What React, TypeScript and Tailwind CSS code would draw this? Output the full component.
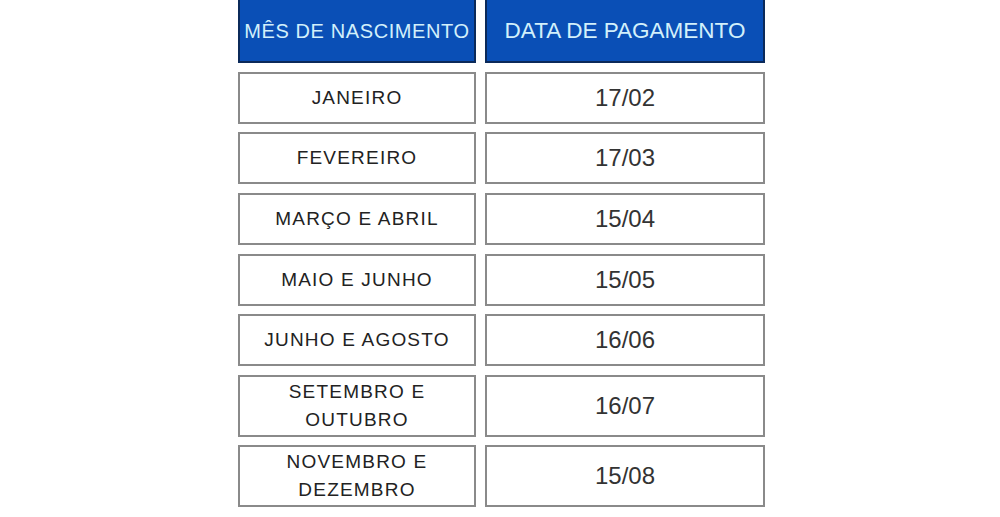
import React from "react";

const rows = [
  { mes: "JANEIRO", data: "17/02", tall: false },
  { mes: "FEVEREIRO", data: "17/03", tall: false },
  { mes: "MARÇO E ABRIL", data: "15/04", tall: false },
  { mes: "MAIO E JUNHO", data: "15/05", tall: false },
  { mes: "JUNHO E AGOSTO", data: "16/06", tall: false },
  { mes: "SETEMBRO E OUTUBRO", data: "16/07", tall: true },
  { mes: "NOVEMBRO E DEZEMBRO", data: "15/08", tall: true },
];

const App = () => {
  return (
    <div className="w-[1000px] h-[517px] bg-white overflow-hidden font-['Liberation_Sans',Arial,sans-serif]">
      <div className="ml-[238px] w-[527px] grid grid-cols-[238px_280px] gap-x-[9px] gap-y-[8.7px]">
        <div className="h-[63px] bg-[#0a4fb6] border-2 border-t-0 border-[#0b2a5a] flex items-center justify-center text-[20px] tracking-[0.6px] text-[#d2f0fb]">
          MÊS DE NASCIMENTO
        </div>
        <div className="h-[63px] bg-[#0a4fb6] border-2 border-t-0 border-[#0b2a5a] flex items-center justify-center text-[22.5px] text-[#d2f0fb]">
          DATA DE PAGAMENTO
        </div>

        {rows.map((r) => (
          <React.Fragment key={r.mes}>
            <div
              className={`${r.tall ? "h-[61.5px]" : "h-[52px]"} border-2 border-[#8a8a8a] bg-white flex items-center justify-center px-6 text-center text-[19px] leading-[28px] tracking-[1.2px] text-[#222]`}
            >
              {r.mes}
            </div>
            <div
              className={`${r.tall ? "h-[61.5px]" : "h-[52px]"} border-2 border-[#8a8a8a] bg-white flex items-center justify-center text-[24px] text-[#333]`}
            >
              {r.data}
            </div>
          </React.Fragment>
        ))}
      </div>
    </div>
  );
};

export default App;
